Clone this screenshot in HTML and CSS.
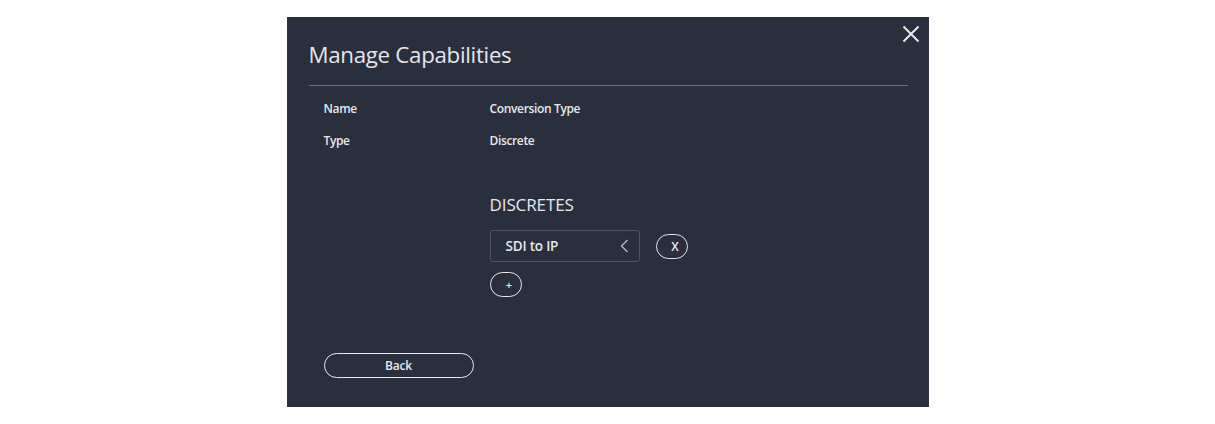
FILE: index.html
```html
<!DOCTYPE html>
<html lang="en">
<head>
<meta charset="utf-8">
<title>Manage Capabilities</title>
<link rel="stylesheet" href="styles.css">
</head>
<body>
<div class="page">
  <div class="dialog">
    <button class="close" aria-label="Close">
      <svg width="18" height="18" viewBox="0 0 18 18"><path d="M1.5 1.5 L16.5 16.5 M16.5 1.5 L1.5 16.5" stroke="#e8e9ec" stroke-width="2" fill="none"/></svg>
    </button>
    <h1 class="title">Manage Capabilities</h1>
    <div class="divider"></div>
    <div class="fields">
      <div class="label">Name</div><div class="value">Conversion Type</div>
      <div class="label">Type</div><div class="value">Discrete</div>
    </div>
    <div class="discretes">
      <h2 class="section">DISCRETES</h2>
      <div class="item-row">
        <div class="select">
          <span>SDI to IP</span>
          <svg class="chev" width="9" height="14" viewBox="0 0 9 14"><path d="M7.5 1 L1.5 7 L7.5 13" stroke="#b4b8c2" stroke-width="1.4" fill="none"/></svg>
        </div>
        <button class="pill small">X</button>
      </div>
      <button class="pill small plus">+</button>
    </div>
    <div class="footer">
      <button class="pill back">Back</button>
    </div>
  </div>
</div>
</body>
</html>
```
FILE: styles.css
```css
html, body {
  margin: 0;
  padding: 0;
  background: #ffffff;
}
body {
  font-family: "Open Sans", "Noto Sans", sans-serif;
  color: #e6e7ea;
}
.page {
  display: flex;
  justify-content: center;
  padding-top: 17px;
}
.dialog {
  position: relative;
  box-sizing: border-box;
  width: 642px;
  height: 390px;
  background: #2a2f3e;
  padding: 0 21px 0 22px;
}
.close {
  position: absolute;
  top: 7px;
  right: 8px;
  width: 20px;
  height: 20px;
  padding: 0;
  border: 0;
  background: transparent;
  display: flex;
  align-items: center;
  justify-content: center;
}
.title {
  margin: 0;
  padding-top: 22px;
  font-size: 22.3px;
  font-weight: 400;
  line-height: 32px;
  color: #e4e6ea;
  letter-spacing: -0.3px;
}
.divider {
  margin-top: 14px;
  height: 1px;
  background: #b8552b;
}
.fields {
  display: grid;
  grid-template-columns: 166px 1fr;
  grid-auto-rows: 32px;
  padding-left: 15px;
  padding-top: 6px;
  font-size: 12px;
  font-weight: 600;
  letter-spacing: -0.35px;
  align-items: center;
  color: #e8e9ec;
}
.discretes {
  padding-left: 181px;
  padding-top: 37px;
}
.section {
  margin: 0;
  font-size: 17px;
  font-weight: 400;
  line-height: 24px;
  color: #e8e9ec;
  letter-spacing: -0.1px;
}
.item-row {
  display: flex;
  align-items: center;
  gap: 16px;
  margin-top: 13px;
}
.select {
  box-sizing: border-box;
  width: 150px;
  height: 32px;
  border: 1px solid #4f5462;
  border-radius: 3px;
  display: flex;
  align-items: center;
  justify-content: space-between;
  padding: 0 10px 0 15px;
  font-size: 13.5px;
  font-weight: 600;
  letter-spacing: -0.2px;
  color: #e8e9ec;
}
.pill {
  box-sizing: border-box;
  border: 1.5px solid #e8e9ec;
  background: transparent;
  color: #e8e9ec;
  font-family: inherit;
  font-weight: 600;
  border-radius: 999px;
  padding: 0;
  display: flex;
  align-items: center;
  justify-content: center;
}
.small {
  width: 32px;
  height: 25px;
  font-size: 12px;
  padding-left: 7px;
}
.plus {
  margin-top: 10px;
  font-size: 11px;
}
.footer {
  padding-left: 15px;
  padding-top: 56px;
}
.back {
  width: 150px;
  height: 25px;
  font-size: 12px;
  letter-spacing: -0.2px;
}
```
